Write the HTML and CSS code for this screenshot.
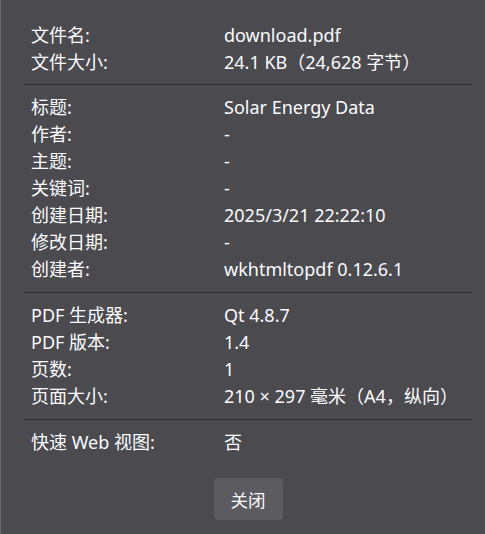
FILE: index.html
```html
<!DOCTYPE html>
<html lang="zh-CN">
<head>
<meta charset="utf-8">
<link rel="stylesheet" href="styles.css">
</head>
<body>
<div class="dialog">
  <div class="group">
    <div class="row"><span class="label">文件名:</span><span class="value">download.pdf</span></div>
    <div class="row"><span class="label">文件大小:</span><span class="value">24.1 KB（24,628 字节）</span></div>
  </div>
  <div class="separator"></div>
  <div class="group">
    <div class="row"><span class="label">标题:</span><span class="value">Solar Energy Data</span></div>
    <div class="row"><span class="label">作者:</span><span class="value">-</span></div>
    <div class="row"><span class="label">主题:</span><span class="value">-</span></div>
    <div class="row"><span class="label">关键词:</span><span class="value">-</span></div>
    <div class="row"><span class="label">创建日期:</span><span class="value">2025/3/21 22:22:10</span></div>
    <div class="row"><span class="label">修改日期:</span><span class="value">-</span></div>
    <div class="row"><span class="label">创建者:</span><span class="value">wkhtmltopdf 0.12.6.1</span></div>
  </div>
  <div class="separator mid"></div>
  <div class="group">
    <div class="row"><span class="label">PDF 生成器:</span><span class="value">Qt 4.8.7</span></div>
    <div class="row"><span class="label">PDF 版本:</span><span class="value">1.4</span></div>
    <div class="row"><span class="label">页数:</span><span class="value">1</span></div>
    <div class="row"><span class="label">页面大小:</span><span class="value">210 × 297 毫米（A4，纵向）</span></div>
  </div>
  <div class="separator mid"></div>
  <div class="group">
    <div class="row"><span class="label">快速 Web 视图:</span><span class="value">否</span></div>
  </div>
  <div class="buttons"><button class="btn">关闭</button></div>
</div>
</body>
</html>
```
FILE: styles.css
```css
html, body {
  margin: 0;
  padding: 0;
  height: 100%;
}
body {
  background: #4a4a4f;
  color: #fbfbfe;
  font-family: "Noto Sans", "Noto Sans CJK SC", sans-serif;
  font-size: 18px;
  border-left: 1px solid #68676d;
  box-sizing: border-box;
}
.dialog {
  padding: 22px 13px 0 23px;
}
.row {
  display: flex;
  height: 27px;
  line-height: 27px;
  padding-left: 7px;
  white-space: nowrap;
}
.label {
  width: 193px;
  flex: none;
}
.separator {
  border-top: 1px solid #2f2e33;
  margin: 8px 0 9px;
}
.separator.mid {
  margin-top: 9px;
}
.buttons {
  display: flex;
  justify-content: center;
  margin-top: 22px;
}
.btn {
  font-family: "Noto Sans", "Noto Sans CJK SC", sans-serif;
  font-size: 17.5px;
  color: #fbfbfe;
  background: #5b5b60;
  border: none;
  border-radius: 4px;
  width: 69px;
  height: 42px;
  padding: 0;
}
```
